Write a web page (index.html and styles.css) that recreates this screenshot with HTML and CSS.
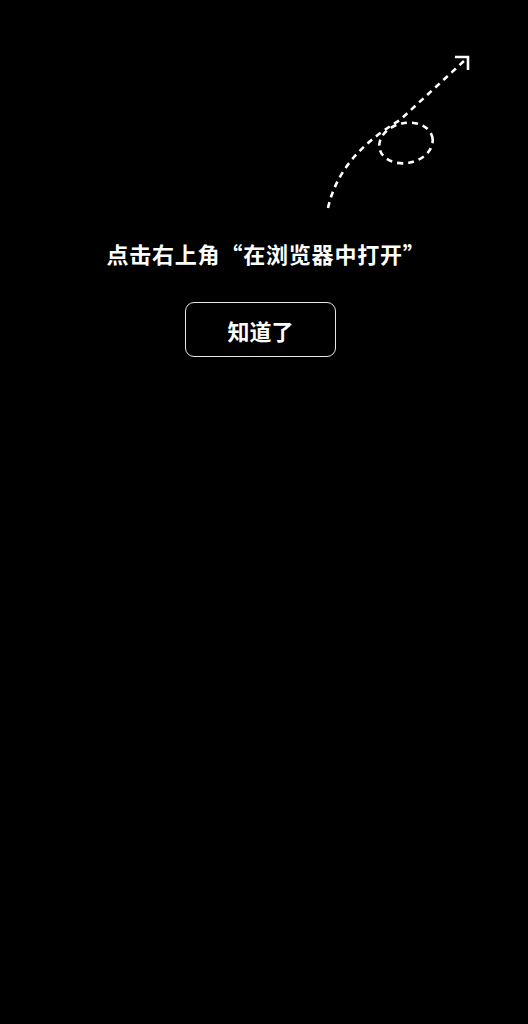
FILE: index.html
```html
<!DOCTYPE html>
<html lang="zh">
<head>
<meta charset="utf-8">
<link rel="stylesheet" href="styles.css">
</head>
<body>
<div class="guide">
  <svg class="arrow" width="528" height="238" viewBox="0 0 528 238">
    <g fill="none" stroke="#fff" stroke-width="2.6" stroke-linecap="butt">
      <path d="M328,208 C336,172 360,144 400,120 L464,61" stroke-dasharray="6 5"/>
      <ellipse cx="406" cy="143" rx="27" ry="20" transform="rotate(-12 406 143)" stroke-dasharray="6 5"/>
      <polyline points="455,57 468,57 468,70"/>
    </g>
  </svg>
  <p class="tip">点击右上角“在浏览器中打开”</p>
  <button class="ok">知道了</button>
</div>
</body>
</html>
```
FILE: styles.css
```css
html, body {
  margin: 0;
  padding: 0;
  background: #000;
  height: 100%;
}
body {
  font-family: "Noto Sans CJK SC", "Noto Sans", sans-serif;
  color: #fff;
}
.guide {
  display: flex;
  flex-direction: column;
  align-items: center;
}
.arrow {
  display: block;
}
.tip {
  margin: 0;
  padding-left: 4px;
  font-size: 22px;
  line-height: 30px;
  font-weight: 700;
  letter-spacing: 0.8px;
}
.ok {
  margin-top: 34px;
  margin-right: 7px;
  width: 151px;
  height: 55px;
  background: transparent;
  border: 1.5px solid #e6e6e6;
  border-radius: 9px;
  color: #fff;
  font-family: "Noto Sans CJK SC", "Noto Sans", sans-serif;
  font-size: 22px;
  font-weight: 700;
  padding: 0;
}
```
